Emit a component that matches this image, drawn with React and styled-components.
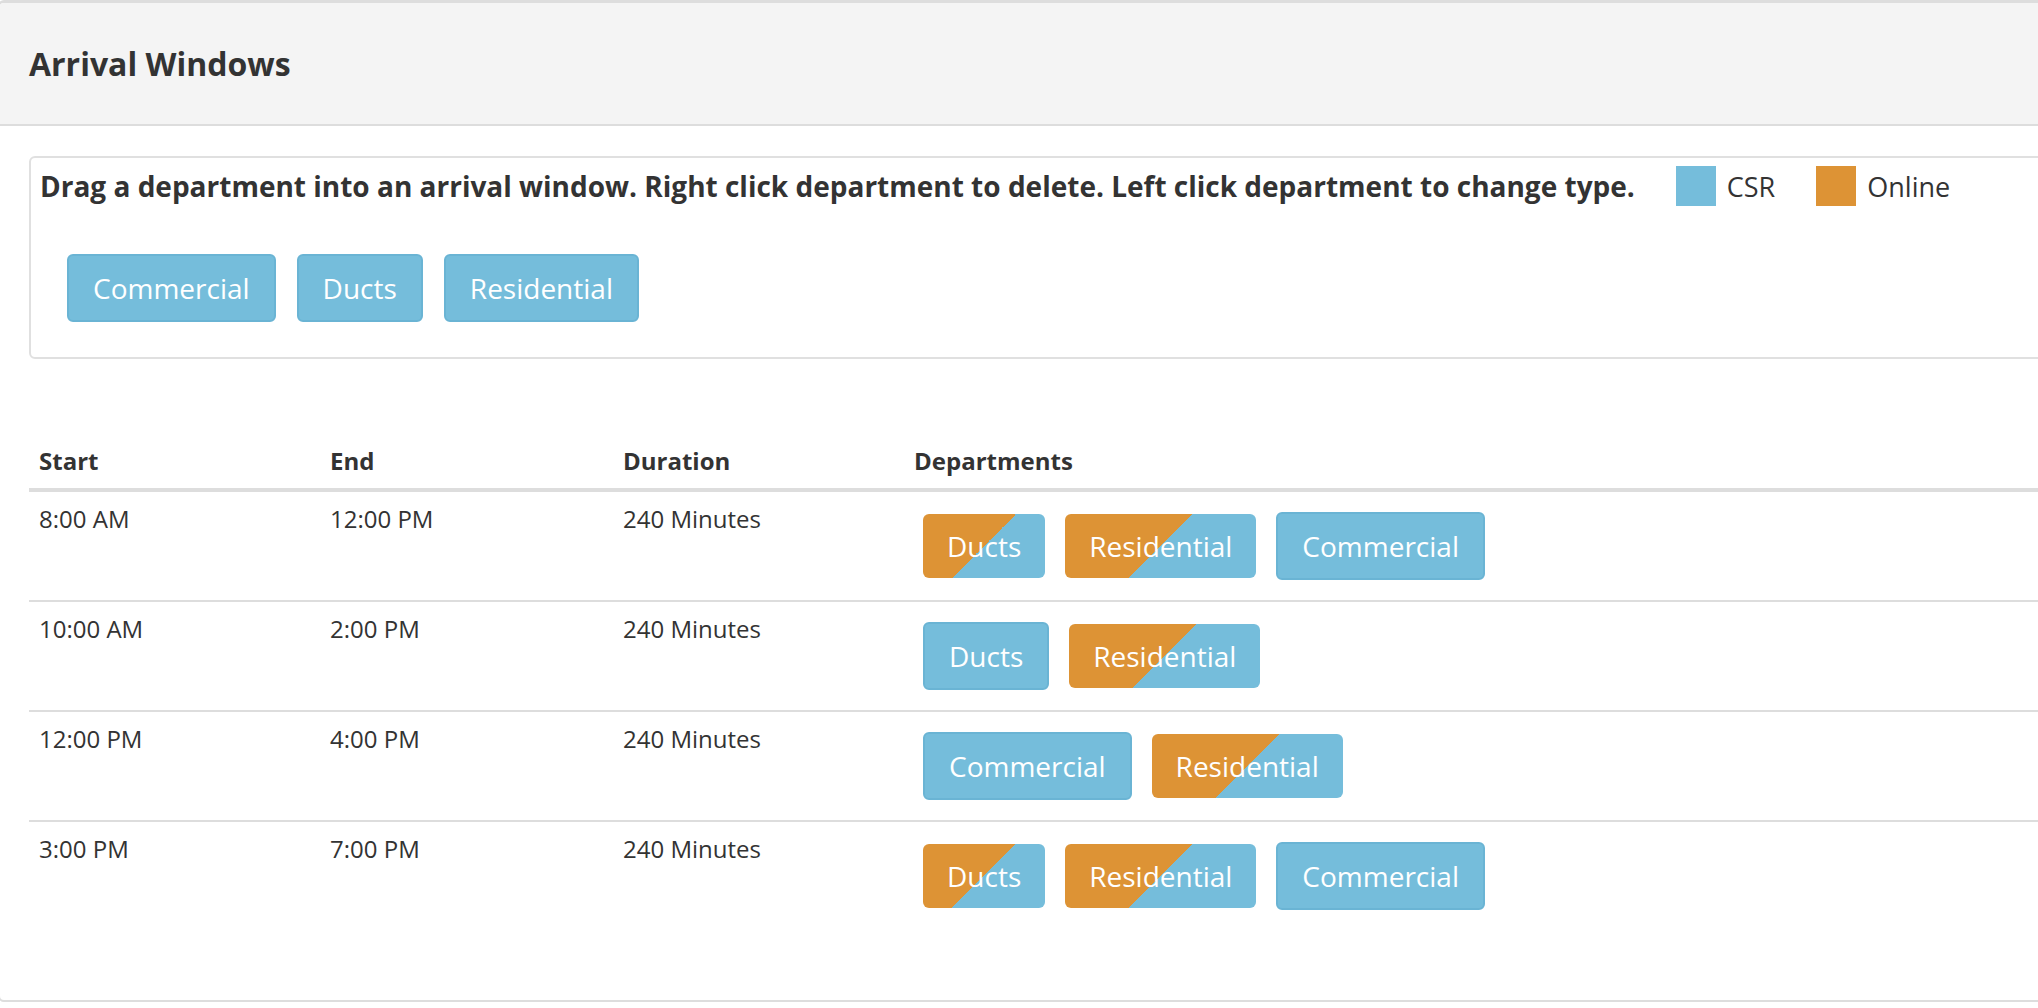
import React from "react";
import styled, { createGlobalStyle, css } from "styled-components";

const CSR_BLUE = "#75bddb";
const ONLINE_ORANGE = "#dd9335";

const GlobalStyle = createGlobalStyle`
  html, body {
    margin: 0;
    padding: 0;
    background: #fff;
    overflow: hidden;
  }
  body {
    font-family: "Open Sans", "Noto Sans", sans-serif;
    color: #333;
  }
`;

const Panel = styled.section`
  width: calc(100% + 80px);
  margin-left: -2px;
  border: 2px solid #ddd;
  border-top-width: 3px;
  border-radius: 6px;
  background: #fff;
  overflow: hidden;
`;

const PanelHeading = styled.header`
  display: flex;
  align-items: center;
  height: 121px;
  padding: 0 29px;
  background: #f4f4f4;
  border-bottom: 2px solid #ddd;
`;

const PanelTitle = styled.h3`
  margin: 0;
  font-size: 32px;
  font-weight: 700;
  line-height: 1.1;
`;

const PanelBody = styled.div`
  padding: 30px 0 70px 29px;
`;

const InstructionBox = styled.div`
  border: 2px solid #e0e0e0;
  border-radius: 6px;
  padding: 8px 10px 35px 9px;
`;

const InstructionLine = styled.div`
  display: flex;
  align-items: center;
  gap: 41px;
  height: 40px;
`;

const Instruction = styled.span`
  font-size: 28px;
  font-weight: 700;
  white-space: nowrap;
`;

const LegendItem = styled.span`
  display: flex;
  align-items: center;
  gap: 11px;
  font-size: 27px;
`;

const Swatch = styled.span`
  width: 40px;
  height: 40px;
  background: ${(p) => p.$color};
`;

const ChipRow = styled.div`
  display: flex;
  align-items: center;
  gap: ${(p) => p.$gap || 20}px;
  padding: ${(p) => p.$padding || "0"};
`;

const Chip = styled.span`
  display: inline-block;
  height: 64px;
  line-height: 64px;
  padding: 0 24px;
  border-radius: 6px;
  font-size: 28px;
  color: #fff;
  white-space: nowrap;
  ${(p) =>
    p.$online
      ? css`
          background: linear-gradient(135deg, ${ONLINE_ORANGE} 50%, ${CSR_BLUE} 50%);
        `
      : css`
          background: ${CSR_BLUE};
          border: 2px solid #6ab4d4;
        `}
`;

const Table = styled.table`
  width: 100%;
  margin-top: 75px;
  border-collapse: collapse;
  table-layout: fixed;
`;

const HeadCell = styled.th`
  padding: 10px 10px;
  font-size: 24px;
  line-height: 34px;
  font-weight: 700;
  text-align: left;
  border-bottom: 4px solid #ddd;
`;

const Row = styled.tr`
  border-bottom: 2px solid #ddd;
  &:last-child {
    border-bottom: none;
  }
`;

const Cell = styled.td`
  padding: 10px 10px;
  font-size: 24px;
  line-height: 34px;
  vertical-align: top;
`;

const DeptCell = styled(Cell)`
  padding: 10px 10px 10px 19px;
`;

const departments = [
  { name: "Commercial" },
  { name: "Ducts" },
  { name: "Residential" },
];

const windows = [
  {
    start: "8:00 AM",
    end: "12:00 PM",
    depts: [
      { name: "Ducts", online: true },
      { name: "Residential", online: true },
      { name: "Commercial" },
    ],
  },
  {
    start: "10:00 AM",
    end: "2:00 PM",
    depts: [{ name: "Ducts" }, { name: "Residential", online: true }],
  },
  {
    start: "12:00 PM",
    end: "4:00 PM",
    depts: [{ name: "Commercial" }, { name: "Residential", online: true }],
  },
  {
    start: "3:00 PM",
    end: "7:00 PM",
    depts: [
      { name: "Ducts", online: true },
      { name: "Residential", online: true },
      { name: "Commercial" },
    ],
  },
];

const App = () => {
  return (
    <>
      <GlobalStyle />
      <Panel>
        <PanelHeading>
          <PanelTitle>Arrival Windows</PanelTitle>
        </PanelHeading>
        <PanelBody>
          <InstructionBox>
            <InstructionLine>
              <Instruction>
                Drag a department into an arrival window. Right click department
                to delete. Left click department to change type.
              </Instruction>
              <LegendItem>
                <Swatch $color={CSR_BLUE} />
                CSR
              </LegendItem>
              <LegendItem>
                <Swatch $color={ONLINE_ORANGE} />
                Online
              </LegendItem>
            </InstructionLine>
            <ChipRow $gap={21} $padding="48px 0 0 27px">
              {departments.map((d) => (
                <Chip key={d.name}>{d.name}</Chip>
              ))}
            </ChipRow>
          </InstructionBox>

          <Table>
            <colgroup>
              <col style={{ width: 291 }} />
              <col style={{ width: 293 }} />
              <col style={{ width: 291 }} />
              <col />
            </colgroup>
            <thead>
              <tr>
                <HeadCell>Start</HeadCell>
                <HeadCell>End</HeadCell>
                <HeadCell>Duration</HeadCell>
                <HeadCell>Departments</HeadCell>
              </tr>
            </thead>
            <tbody>
              {windows.map((w) => (
                <Row key={w.start}>
                  <Cell>{w.start}</Cell>
                  <Cell>{w.end}</Cell>
                  <Cell>240 Minutes</Cell>
                  <DeptCell>
                    <ChipRow $padding="10px 0">
                      {w.depts.map((d) => (
                        <Chip key={d.name} $online={d.online}>
                          {d.name}
                        </Chip>
                      ))}
                    </ChipRow>
                  </DeptCell>
                </Row>
              ))}
            </tbody>
          </Table>
        </PanelBody>
      </Panel>
    </>
  );
};

export default App;
